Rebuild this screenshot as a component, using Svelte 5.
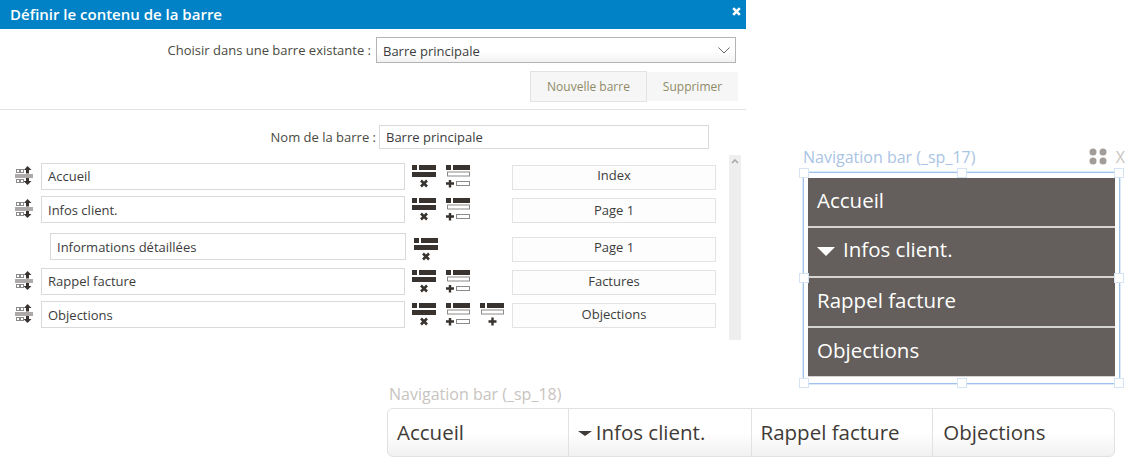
<script>
  const rows = [
    { label: 'Accueil', page: 'Index', add: true, child: false, sub: false },
    { label: 'Infos client.', page: 'Page 1', add: true, child: false, sub: false },
    { label: 'Informations détaillées', page: 'Page 1', add: false, child: false, sub: true },
    { label: 'Rappel facture', page: 'Factures', add: true, child: false, sub: false },
    { label: 'Objections', page: 'Objections', add: true, child: true, sub: false }
  ];
  const navItems = ['Accueil', 'Infos client.', 'Rappel facture', 'Objections'];
  const handles = [
    ['0', '0'], ['50%', '0'], ['100%', '0'],
    ['0', '50%'], ['100%', '50%'],
    ['0', '100%'], ['50%', '100%'], ['100%', '100%']
  ];
</script>

{#snippet topBars()}
  <rect x="0" y="0" width="5" height="5" fill="#38332f" />
  <rect x="7" y="0" width="17" height="5" fill="#38332f" />
{/snippet}

<div class="page">
  <section class="dialog">
    <header class="head">
      <span>Définir le contenu de la barre</span>
      <svg class="close" width="9" height="9" viewBox="0 0 9 9"><path d="M1.2 1.2l6.6 6.6M7.8 1.2L1.2 7.8" stroke="#fff" stroke-width="2.6" /></svg>
    </header>

    <div class="choose">
      <span class="lbl">Choisir dans une barre existante :</span>
      <div class="select">
        <span class="seltext">Barre principale</span>
        <svg width="12" height="7" viewBox="0 0 12 7"><path d="M.5.5L6 6 11.500.5" fill="none" stroke="#666" /></svg>
      </div>
    </div>

    <div class="actions">
      <button class="new">Nouvelle barre</button>
      <button class="del">Supprimer</button>
    </div>

    <div class="name">
      <span class="lbl">Nom de la barre :</span>
      <div class="field wide">Barre principale</div>
    </div>

    <div class="body">
      <div class="list">
        {#each rows as r}
          <div class="row" class:sub={r.sub}>
            <div class="grip">
              {#if !r.sub}
                <svg width="18" height="19" viewBox="0 0 18 19">
                  <path d="M12.500 0l4 4h-2.500v3.500h-3V4H9z" fill="#38332f" />
                  <rect x="1.500" y="3.500" width="3" height="3" fill="none" stroke="#8a8a8a" />
                  <rect x="5.500" y="3.500" width="3" height="3" fill="none" stroke="#8a8a8a" />
                  <rect x="0" y="8.500" width="18" height="1" fill="#5a5552" />
                  <rect x="0" y="10.500" width="18" height="1" fill="#5a5552" />
                  <rect x="1.500" y="13.500" width="3" height="3" fill="none" stroke="#8a8a8a" />
                  <rect x="5.500" y="13.500" width="3" height="3" fill="none" stroke="#8a8a8a" />
                  <path d="M12.500 19l-4-4H11v-3h3v3h2.500z" fill="#38332f" />
                </svg>
              {/if}
            </div>
            <div class="field label">{r.label}</div>
            <div class="tools">
              <svg width="24" height="23" viewBox="0 0 24 23">
                {@render topBars()}
                <rect x="0" y="7" width="24" height="5" fill="#38332f" />
                <path d="M9 15.500l6 6M15 15.500l-6 6" stroke="#38332f" stroke-width="2.600" />
              </svg>
              {#if r.add}
                <svg width="24" height="23" viewBox="0 0 24 23">
                  {@render topBars()}
                  <rect x="1.500" y="7" width="22" height="4" fill="#fff" stroke="#8c8a88" />
                  <path d="M0 18.500h8M4 15v7.500" stroke="#38332f" stroke-width="2.400" />
                  <rect x="10.500" y="16.500" width="13" height="4" fill="#fff" stroke="#8c8a88" />
                </svg>
              {/if}
              {#if r.child}
                <svg width="24" height="23" viewBox="0 0 24 23">
                  {@render topBars()}
                  <rect x="1.500" y="7" width="22" height="4" fill="#fff" stroke="#8c8a88" />
                  <path d="M8.500 18.500h8M12.500 14.500v8" stroke="#38332f" stroke-width="2.400" />
                </svg>
              {/if}
            </div>
            <div class="page-btn">{r.page}</div>
          </div>
        {/each}
      </div>
      <div class="scroll">
        <svg width="8" height="5" viewBox="0 0 8 5"><path d="M1 4l3-3 3 3" fill="none" stroke="#a9a5a7" stroke-width="1.500" /></svg>
      </div>
    </div>
  </section>

  <section class="vwidget">
    <div class="vtitle">
      <span>Navigation bar (_sp_17)</span>
      <svg class="dots" width="18" height="17" viewBox="0 0 18 17" fill="#a39d99">
        <circle cx="4" cy="4" r="3.500" /><circle cx="14" cy="4" r="3.500" />
        <circle cx="4" cy="13" r="3.500" /><circle cx="14" cy="13" r="3.500" />
      </svg>
      <span class="x">X</span>
    </div>
    <div class="selbox">
      {#each handles as h}
        <i class="handle" style="left:{h[0]};top:{h[1]}"></i>
      {/each}
      <nav class="vnav">
        {#each navItems as n, i}
          <div class="vitem">
            {#if i === 1}<span class="tri"></span>{/if}{n}
          </div>
        {/each}
      </nav>
    </div>
  </section>

  <section class="hwidget">
    <div class="htitle">Navigation bar (_sp_18)</div>
    <nav class="hnav">
      {#each navItems as n, i}
        <div class="hitem">
          {#if i === 1}<span class="htri"></span>{/if}{n}
        </div>
      {/each}
    </nav>
  </section>
</div>

<style>
  :global(body) { margin: 0; background: #fff; }
  .page {
    position: relative;
    width: 1130px;
    height: 467px;
    overflow: hidden;
    font-family: "Open Sans", "Noto Sans", sans-serif;
    color: #3a3a36;
  }
  .dialog { position: absolute; left: 0; top: 0; width: 746px; height: 340px; }
  .head {
    height: 29px;
    box-sizing: border-box;
    background: #0282c6;
    color: #fff;
    font-size: 15px;
    font-weight: 600;
    padding: 0 10px;
    display: flex;
    align-items: center;
    justify-content: space-between;
    line-height: 29px;
  }
  .close { margin: -7px -5px 0 0; }
  .lbl { font-size: 13px; color: #4a4a42; white-space: nowrap; }
  .choose {
    display: flex;
    justify-content: flex-end;
    align-items: center;
    gap: 5px;
    padding: 8px 10px 0 0;
  }
  .select {
    width: 360px;
    height: 26px;
    box-sizing: border-box;
    border: 1px solid #b4b4b4;
    background: linear-gradient(#fff 55%, #f2f2f2);
    display: flex;
    align-items: center;
    justify-content: space-between;
    padding: 0 5px 0 6px;
    font-size: 13px;
    color: #3c3c3c;
  }
  .seltext { padding-top: 2px; }
  .actions {
    display: flex;
    align-items: center;
    justify-content: flex-end;
    padding: 8px 8px 7px 0;
    border-bottom: 1px solid #e3e3e3;
    height: 31px;
  }
  .actions button {
    font: 12px "Open Sans", "Noto Sans", sans-serif;
    color: #8f8b66;
    background: #f6f6f6;
    padding: 0;
  }
  .new { width: 117px; height: 31px; border: 1px solid #e3e3e3; }
  .del { width: 91px; height: 29px; border: 0; }
  .name {
    display: flex;
    justify-content: flex-end;
    align-items: center;
    gap: 3px;
    padding: 15px 37px 0 0;
  }
  .field {
    box-sizing: border-box;
    border: 1px solid #d9d9d9;
    background: #fff;
    font-size: 13px;
    color: #3c3c3c;
    padding-left: 6px;
    display: flex;
    align-items: center;
  }
  .wide { width: 330px; height: 24px; }
  .body { display: flex; padding: 6px 5px 0 15px; }
  .list { width: 701px; padding-top: 8px; display: flex; flex-direction: column; gap: 6px; }
  .row { display: flex; align-items: flex-start; height: 27px; }
  .row:nth-child(3) { margin: 4px 0 2px; }
  .grip { width: 26px; padding-top: 3px; height: 20px; }
  .label { width: 364px; height: 27px; }
  .row:nth-child(3n+1) .label { padding-bottom: 2px; }
  .sub .grip { width: 35px; }
  .sub .label { width: 356px; }
  .tools { display: flex; gap: 10px; padding: 2px 0 0 7px; width: 100px; }
  .sub .tools { width: 98px; padding: 5px 0 0 7px; margin-left: 1px; }
  .page-btn {
    width: 204px;
    height: 25px;
    box-sizing: border-box;
    border: 1px solid #e3e3e3;
    background: #fdfdfd;
    font-size: 13px;
    color: #3c3c3c;
    text-align: center;
    line-height: 20px;
    margin-top: 2px;
  }
  .row:first-child .page-btn { line-height: 18px; }
  .row:nth-child(2) .page-btn { line-height: 22px; }
  .sub .page-btn { margin-top: 4px; line-height: 18px; }
  .scroll {
    width: 12px;
    height: 185px;
    margin-left: 13px;
    background: #eeeeee;
    display: flex;
    justify-content: center;
    padding-top: 4px;
    box-sizing: border-box;
  }
  .scroll svg { display: block; }

  .vwidget { position: absolute; left: 803px; top: 148px; width: 322px; }
  .vtitle {
    display: flex;
    align-items: flex-start;
    height: 19px;
    font-size: 16px;
    line-height: 19px;
    color: #a9c4e4;
    white-space: nowrap;
  }
  .dots { margin-left: auto; margin-right: 9px; }
  .x { font-size: 16px; color: #c9c4bf; }
  .selbox {
    position: relative;
    margin-top: 5px;
    width: 317px;
    height: 212px;
    box-sizing: border-box;
    border: 1px solid #9fc3ea;
    box-shadow: 0 0 0 1px #dce9f7;
    padding: 5px 4px 0 4px;
  }
  .handle {
    position: absolute;
    box-sizing: border-box;
    width: 10px;
    height: 10px;
    margin: -5px 0 0 -5px;
    background: #fff;
    border: 1px solid #d5e3f3;
  }
  .vnav { display: flex; flex-direction: column; }
  .vitem {
    box-sizing: border-box;
    background: #645f5c;
    color: #fff;
    font-size: 20.500px;
    padding-left: 9px;
    display: flex;
    align-items: center;
    border-bottom: 2px solid #d6d4d2;
    height: 50px;
    padding-bottom: 4px;
  }
  .vitem:nth-child(2) { padding-bottom: 6px; }
  .vitem:nth-child(2) .tri { margin-top: 4px; }
  .vitem:last-child { border-bottom: 1px solid #d6d4d2; height: 49px; }
  .tri {
    width: 0; height: 0;
    border-left: 9.500px solid transparent;
    border-right: 9.500px solid transparent;
    border-top: 9px solid #fff;
    margin-right: 8px;
  }

  .hwidget { position: absolute; left: 387px; top: 385px; width: 728px; }
  .htitle { font-size: 16px; color: #c8c4c0; height: 23px; line-height: 19px; padding-left: 2px; white-space: nowrap; }
  .hnav {
    display: flex;
    height: 49px;
    box-sizing: border-box;
    border: 1px solid #e2e2e2;
    border-radius: 6px;
    background: linear-gradient(#fff 50%, #f1f1f1);
  }
  .hitem {
    box-sizing: border-box;
    width: 182px;
    padding: 0 0 2px 9px;
    font-size: 20.500px;
    color: #3f3a36;
    display: flex;
    align-items: center;
    border-right: 1px solid #e2e2e2;
    white-space: nowrap;
  }
  .hitem:first-child { width: 181px; }
  .hitem:nth-child(2) { width: 183px; }
  .hitem:last-child { border-right: 0; width: 181px; padding-left: 10px; }
  .htri {
    width: 0; height: 0;
    border-left: 7px solid transparent;
    border-right: 7px solid transparent;
    border-top: 5px solid #3f3a36;
    margin: 4px 4px 0 0;
  }
</style>
